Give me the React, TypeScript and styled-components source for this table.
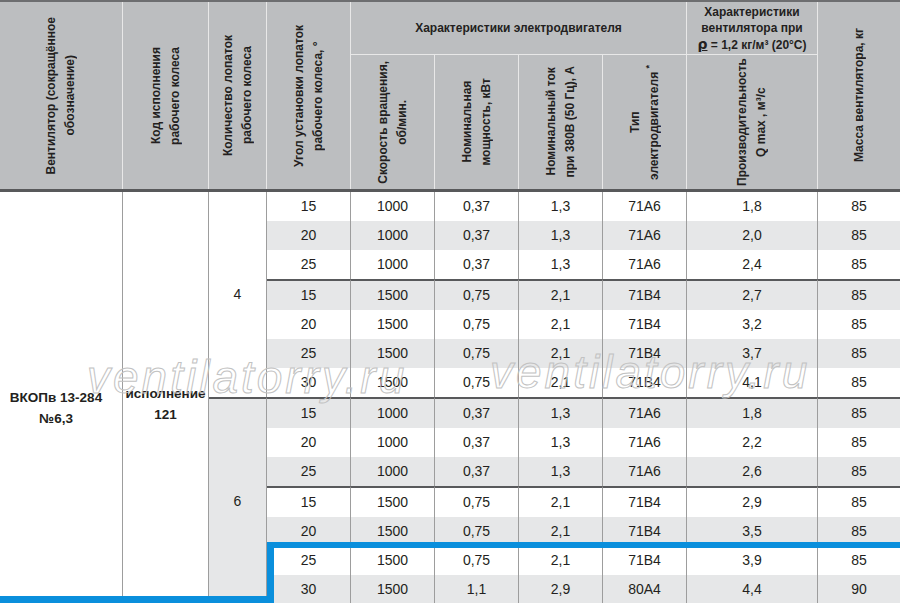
import React from 'react';
import styled, { createGlobalStyle } from 'styled-components';

const FONT = `"Liberation Sans", Arial, Helvetica, sans-serif`;
const COLS = '123px 86px 58px 84px 84px 84px 84px 84px 131px 82px';
const INK = '#231f20';
const BLUE = '#0a8fdc';

const Global = createGlobalStyle`
  html, body { margin: 0; padding: 0; background: #fff; }
  body { font-family: ${FONT}; color: ${INK}; overflow: hidden; }
`;

const Sheet = styled.div`
  position: relative;
  width: 900px;
  height: 603px;
  overflow: hidden;
`;

const Head = styled.div`
  display: grid;
  grid-template-columns: ${COLS};
  grid-template-rows: 53px 134px;
  background: #bcbec0;
  border-top: 2px solid #6d6e70;
  border-bottom: 3px solid #58595b;
`;

const HCell = styled.div<{ $col: string; $row: string; $last?: boolean; $under?: boolean }>`
  grid-column: ${(p) => p.$col};
  grid-row: ${(p) => p.$row};
  box-sizing: border-box;
  display: flex;
  align-items: center;
  justify-content: center;
  border-right: ${(p) => (p.$last ? 'none' : '1px solid #e8e8e8')};
  border-bottom: ${(p) => (p.$under ? '1px solid #e8e8e8' : 'none')};
  font-weight: 700;
  font-size: 12px;
  line-height: 16px;
  text-align: center;
  overflow: hidden;
`;

const VText = styled.span`
  writing-mode: vertical-rl;
  transform: rotate(180deg);
  line-height: 19px;
  white-space: nowrap;
  text-align: center;
`;

const Rho = styled.span`
  font-family: "DejaVu Sans", sans-serif;
  font-size: 14px;
  text-decoration: underline;
`;

const Sup = styled.sup`
  font-size: 9px;
  line-height: 0;
`;

const Body = styled.div`
  display: grid;
  grid-template-columns: ${COLS};
`;

const SpanCell = styled.div<{ $col: number; $rows: string; $alt?: boolean; $sep?: boolean; $bold?: boolean; $shift?: number; $padRight?: number }>`
  grid-column: ${(p) => p.$col};
  grid-row: ${(p) => p.$rows};
  box-sizing: border-box;
  display: flex;
  align-items: center;
  justify-content: center;
  padding-top: ${(p) => p.$shift ?? 0}px;
  padding-right: ${(p) => p.$padRight ?? 0}px;
  background: ${(p) => (p.$alt ? '#e6e7e8' : '#fff')};
  border-right: 1px solid #9d9d9d;
  border-top: ${(p) => (p.$sep ? '2px solid #58595b' : 'none')};
  font-size: ${(p) => (p.$bold ? 13.5 : 14)}px;
  font-weight: ${(p) => (p.$bold ? 700 : 400)};
  line-height: 21px;
  text-align: center;
  white-space: nowrap;
`;

const Cell = styled.div<{ $alt: boolean; $sep: boolean; $last: boolean }>`
  box-sizing: border-box;
  height: ${(p) => (p.$sep ? 31 : 29)}px;
  background: ${(p) => (p.$alt ? '#e6e7e8' : '#fff')};
  border-top: ${(p) => (p.$sep ? '2px solid #58595b' : 'none')};
  border-right: ${(p) => (p.$last ? 'none' : '1px solid #9d9d9d')};
  font-size: 14px;
  line-height: 29px;
  text-align: center;
`;

const HighlightBox = styled.div`
  position: absolute;
  left: 267px;
  top: 542px;
  right: 0;
  height: 80px;
  border-top: 6px solid ${BLUE};
  border-left: 7px solid ${BLUE};
  pointer-events: none;
`;

const HighlightBase = styled.div`
  position: absolute;
  left: 0;
  top: 596px;
  width: 274px;
  height: 7px;
  background: ${BLUE};
  pointer-events: none;
`;

const Watermark = styled.span<{ $left: number; $top: number }>`
  position: absolute;
  top: ${(p) => p.$top}px;
  left: ${(p) => p.$left}px;
  font-family: "Liberation Sans", Arial, sans-serif;
  font-style: italic;
  font-size: 46px;
  line-height: 1;
  letter-spacing: 3px;
  color: transparent;
  -webkit-text-stroke: 1px #c2c2c2;
  white-space: nowrap;
  pointer-events: none;
`;

type Row = [string, string, string, string, string, string, string];

const rows: Row[] = [
  ['15', '1000', '0,37', '1,3', '71A6', '1,8', '85'],
  ['20', '1000', '0,37', '1,3', '71A6', '2,0', '85'],
  ['25', '1000', '0,37', '1,3', '71A6', '2,4', '85'],
  ['15', '1500', '0,75', '2,1', '71B4', '2,7', '85'],
  ['20', '1500', '0,75', '2,1', '71B4', '3,2', '85'],
  ['25', '1500', '0,75', '2,1', '71B4', '3,7', '85'],
  ['30', '1500', '0,75', '2,1', '71B4', '4,1', '85'],
  ['15', '1000', '0,37', '1,3', '71A6', '1,8', '85'],
  ['20', '1000', '0,37', '1,3', '71A6', '2,2', '85'],
  ['25', '1000', '0,37', '1,3', '71A6', '2,6', '85'],
  ['15', '1500', '0,75', '2,1', '71B4', '2,9', '85'],
  ['20', '1500', '0,75', '2,1', '71B4', '3,5', '85'],
  ['25', '1500', '0,75', '2,1', '71B4', '3,9', '85'],
  ['30', '1500', '1,1', '2,9', '80A4', '4,4', '90'],
];

const SEPS = new Set([3, 7, 10]);

export default function App() {
  return (
    <>
      <Global />
      <Sheet>
        <Head>
          <HCell $col="1" $row="1 / 3">
            <VText>Вентилятор (сокращённое<br />обозначение)</VText>
          </HCell>
          <HCell $col="2" $row="1 / 3">
            <VText>Код исполнения<br />рабочего колеса</VText>
          </HCell>
          <HCell $col="3" $row="1 / 3">
            <VText>Количество лопаток<br />рабочего колеса</VText>
          </HCell>
          <HCell $col="4" $row="1 / 3">
            <VText>Угол установки лопаток<br />рабочего колеса, °</VText>
          </HCell>
          <HCell $col="5 / 9" $row="1" $under>
            Характеристики электродвигателя
          </HCell>
          <HCell $col="9" $row="1" $under>
            <span>
              Характеристики<br />вентилятора при<br />
              <Rho>ρ</Rho> = 1,2 кг/м³ (20°С)
            </span>
          </HCell>
          <HCell $col="10" $row="1 / 3" $last>
            <VText>Масса вентилятора, кг</VText>
          </HCell>
          <HCell $col="5" $row="2">
            <VText>Скорость вращения,<br />об/мин.</VText>
          </HCell>
          <HCell $col="6" $row="2">
            <VText>Номинальная<br />мощность, кВт</VText>
          </HCell>
          <HCell $col="7" $row="2">
            <VText>Номинальный ток<br />при 380В (50 Гц), А</VText>
          </HCell>
          <HCell $col="8" $row="2">
            <VText>Тип<br />электродвигателя <Sup>*</Sup></VText>
          </HCell>
          <HCell $col="9" $row="2">
            <VText>Производительность<br />Q max , м³/с</VText>
          </HCell>
        </Head>

        <Body>
          <SpanCell $col={1} $rows="1 / 15" $bold $shift={20} $padRight={10}>
            <span>ВКОПв 13-284<br />№6,3</span>
          </SpanCell>
          <SpanCell $col={2} $rows="1 / 15" $bold $shift={12}>
            <span>исполнение<br />121</span>
          </SpanCell>
          <SpanCell $col={3} $rows="1 / 8">4</SpanCell>
          <SpanCell $col={3} $rows="8 / 15" $alt $sep>6</SpanCell>
          {rows.map((r, i) =>
            r.map((v, j) => (
              <Cell
                key={`${i}-${j}`}
                style={{ gridRow: i + 1, gridColumn: j + 4 }}
                $alt={i % 2 === 1}
                $sep={SEPS.has(i)}
                $last={j === r.length - 1}
              >
                {v}
              </Cell>
            ))
          )}
        </Body>

        <Watermark $left={87} $top={354}>ventilatorry.ru</Watermark>
        <Watermark $left={490} $top={349}>ventilatorry.ru</Watermark>
        <HighlightBox />
        <HighlightBase />
      </Sheet>
    </>
  );
}
